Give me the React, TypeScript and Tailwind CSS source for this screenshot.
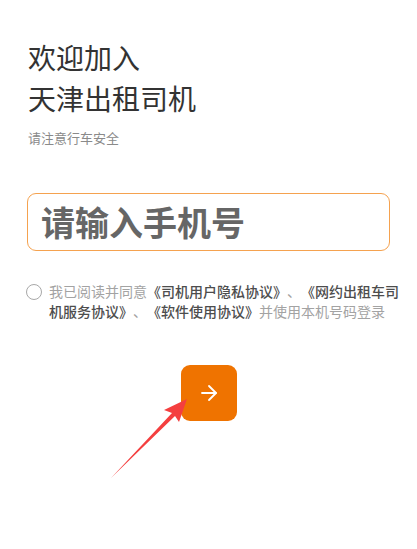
import { ArrowRight } from "lucide-react";

const App = () => {
  return (
    <div
      className="relative w-[417px] h-[549px] bg-white overflow-hidden"
      style={{ fontFamily: '"Noto Sans CJK SC", "Noto Sans", sans-serif' }}
    >
      <div className="pl-[28px] pt-[37px]">
        <h1 className="text-[28px] leading-[41px] text-[#333333] font-normal">
          欢迎加入
          <br />
          天津出租司机
        </h1>
        <p className="mt-[10px] text-[13px] leading-[18px] text-[#8a8a8a]">请注意行车安全</p>
      </div>

      <div className="mx-[27px] mt-[46px] h-[58px] rounded-[9px] border-[1.5px] border-[#f5a24f] flex items-center pl-[13px]">
        <span className="text-[34px] font-bold text-[#666666] leading-none">请输入手机号</span>
      </div>

      <div className="flex items-start pl-[26px] pr-[14px] mt-[30px]">
        <span className="mt-[3px] w-[16px] h-[16px] rounded-full border-[1.5px] border-[#a8a8a8] shrink-0" />
        <p className="ml-[7px] text-[14px] leading-[20px] text-[#a3a3a3] [text-spacing-trim:space-all]">
          我已阅读并同意<span className="text-[#4d4d4d] font-medium">《司机用户隐私协议》</span>、<span className="text-[#4d4d4d] font-medium">《网约出租车司机服务协议》</span>、<span className="text-[#4d4d4d] font-medium">《软件使用协议》</span>并使用本机号码登录
        </p>
      </div>

      <div className="flex justify-center mt-[44px]">
        <button className="w-[56px] h-[56px] rounded-[9px] bg-[#ef7300] flex items-center justify-center">
          <ArrowRight className="w-[24px] h-[24px] text-white" strokeWidth={1.8} />
        </button>
      </div>

      <svg className="absolute left-0 top-0" width="417" height="549" viewBox="0 0 417 549">
        <polygon
          points="111,478 172,413 164,410 187,399 179,422 175,416"
          fill="#f43f3f"
        />
      </svg>
    </div>
  );
};

export default App;
